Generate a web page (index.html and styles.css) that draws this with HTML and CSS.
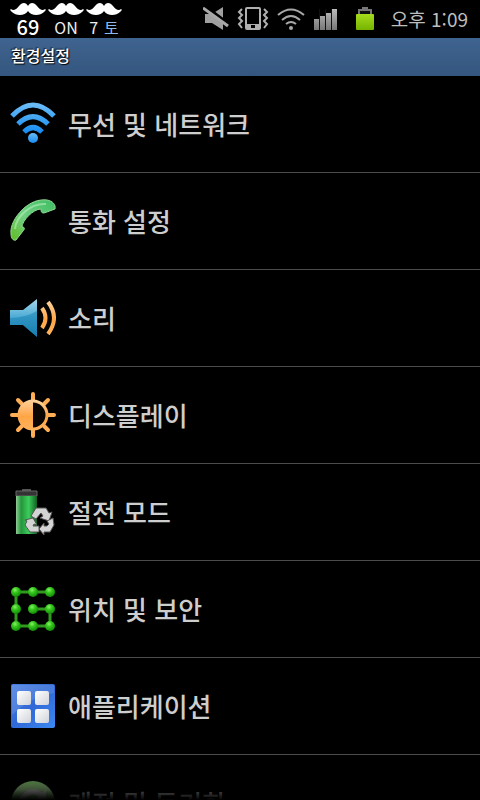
FILE: index.html
```
<!DOCTYPE html>
<html lang="ko">
<head>
<meta charset="utf-8">
<meta name="viewport" content="width=device-width, initial-scale=1">
<title>환경설정</title>
<link rel="stylesheet" href="styles.css">
</head>
<body>
<svg class="defs" aria-hidden="true">
  <defs>
    <linearGradient id="blue" x1="0" y1="0" x2="0" y2="1"><stop offset="0" stop-color="#69baf5"/><stop offset="1" stop-color="#188df0"/></linearGradient>
    <linearGradient id="phone" x1="1" y1="0" x2="0" y2="1"><stop offset="0" stop-color="#3fbd63"/><stop offset=".55" stop-color="#6ed083"/><stop offset="1" stop-color="#62bb24"/></linearGradient>
    <linearGradient id="speaker" x1="0" y1="0" x2="0" y2="1"><stop offset="0" stop-color="#a5d8ec"/><stop offset=".5" stop-color="#48a9d3"/><stop offset="1" stop-color="#167eb0"/></linearGradient>
    <linearGradient id="orange" x1="0" y1="0" x2="0" y2="1"><stop offset="0" stop-color="#ffd09a"/><stop offset=".55" stop-color="#ffa545"/><stop offset="1" stop-color="#ffb25e"/></linearGradient>
    <linearGradient id="cell" x1="0" y1="0" x2="1" y2="0"><stop offset="0" stop-color="#8ecb93"/><stop offset=".25" stop-color="#23963a"/><stop offset=".6" stop-color="#3ccc5c"/><stop offset="1" stop-color="#115f22"/></linearGradient>
    <radialGradient id="dot" cx=".4" cy=".3" r=".7"><stop offset="0" stop-color="#8cf06a"/><stop offset=".4" stop-color="#35c81c"/><stop offset="1" stop-color="#128a08"/></radialGradient>
    <linearGradient id="app" x1="0" y1="0" x2="1" y2="1"><stop offset="0" stop-color="#4a80e2"/><stop offset=".5" stop-color="#3069d6"/><stop offset="1" stop-color="#3d8af4"/></linearGradient>
    <linearGradient id="tile" x1="0" y1="0" x2="1" y2="1"><stop offset="0" stop-color="#fff"/><stop offset="1" stop-color="#cfd3da"/></linearGradient>
    <linearGradient id="lime" x1="0" y1="0" x2="0" y2="1"><stop offset="0" stop-color="#a5dc1c"/><stop offset="1" stop-color="#76b400"/></linearGradient>
    <linearGradient id="sync" x1="0" y1="0" x2="0" y2="1"><stop offset="0" stop-color="#6fae5c"/><stop offset=".2" stop-color="#a4d393"/><stop offset=".6" stop-color="#4b8d38"/></linearGradient>
    <linearGradient id="bars" x1="0" y1="0" x2="0" y2="1"><stop offset="0" stop-color="#bbb"/><stop offset="1" stop-color="#777"/></linearGradient>
    <symbol id="mustache" viewBox="0 0 36 14">
      <path fill="#fff" d="M18 4C16 0 12 0 9 4 6 8 3 9 1 7 0 7 0 9 2 10 6 14 15 14 18 9 21 14 30 14 34 10 36 9 36 7 35 7 33 9 30 8 27 4 24 0 20 0 18 4Z"/>
    </symbol>
  </defs>
</svg>

<header class="status">
  <div class="widgets">
    <div class="widget"><svg class="mustache" aria-hidden="true"><use href="#mustache"/></svg><span class="level">69</span></div>
    <div class="widget"><svg class="mustache" aria-hidden="true"><use href="#mustache"/></svg><span>ON</span></div>
    <div class="widget"><svg class="mustache" aria-hidden="true"><use href="#mustache"/></svg><span class="date"><span>7</span><span class="day">토</span></span></div>
  </div>
  <div class="indicators">
    <svg width="26" height="26" viewBox="0 0 26 26" aria-hidden="true">
      <path fill="#a0a0a0" d="M2 8h7L20 1v23L9 17H2z"/>
      <path stroke="#000" stroke-width="3" d="M2 0l24 18"/>
      <path stroke="#a8a8a8" stroke-width="3" d="M0 2l25 18"/>
    </svg>
    <svg width="32" height="26" viewBox="0 0 32 26" aria-hidden="true" fill="none" stroke="#b0b0b0">
      <rect x="9" y="2" width="14" height="21" rx="1" stroke-width="2"/>
      <path fill="#b0b0b0" stroke="none" d="M9 18h14v5H9z"/><path fill="#000" stroke="none" d="M14 19h4v3h-4z"/>
      <path stroke-width="2" d="M5 3L2 6l3 3-3 3 3 3-3 3 3 4M27 3l3 3-3 3 3 3-3 3 3 3-3 4"/>
    </svg>
    <svg width="28" height="24" viewBox="0 0 28 24" aria-hidden="true" fill="none" stroke="#a8a8a8" stroke-width="2">
      <path d="M1 8Q14-3 27 8M5 13q9-8 18 0M9 17q5-4 10 0"/><circle cx="14" cy="21" r="2" fill="#a8a8a8" stroke="none"/>
    </svg>
    <svg width="26" height="24" viewBox="0 0 26 24" aria-hidden="true" fill="url(#bars)">
      <path d="M1 12h5v11H1zM7 9h5v14H7zM13 6h5v17h-5zM19 2h5v21h-5z"/>
      <path fill="#111" d="M6 2v21h1V2zM12 2v21h1V2zM18 2v21h1V2z"/>
    </svg>
    <svg class="battery" width="20" height="24" viewBox="0 0 20 24" aria-hidden="true">
      <path fill="#777" d="M7 0h6v2h4v6H3V2h4z"/><path fill="#111" d="M5 4h10v3H5z"/><rect x="1" y="7" width="18" height="16" rx="1" fill="url(#lime)"/>
    </svg>
    <time class="clock">오후 1:09</time>
  </div>
</header>

<h1 class="title">환경설정</h1>

<main>
  <ul class="list">
    <li><a class="row" href="#network">
      <svg class="icon" viewBox="0 0 46 46" aria-hidden="true" fill="none" stroke="url(#blue)" stroke-width="5">
        <path d="M2 15Q23-7 44 15M8 23q15-15 30 0M14 31q9-9 18 0"/><circle cx="23" cy="37" r="5" fill="url(#blue)" stroke="none"/>
      </svg><span>무선 및 네트워크</span></a></li>
    <li><a class="row" href="#call">
      <svg class="icon" viewBox="0 0 46 46" aria-hidden="true">
        <path fill="url(#phone)" stroke="#8ed890" d="M6 42C3 43 1 40 1 36 0 28 5 19 12 12 20 4 29 1 37 2 43 3 46 7 45 11L34 15C31 15 31 13 31 11 23 11 12 23 12 29 15 29 15 31 13 33Z"/>
        <path fill="none" stroke="#b8eeb8" stroke-width="2" opacity=".6" d="M5 31C6 19 20 5 36 6"/>
      </svg><span>통화 설정</span></a></li>
    <li><a class="row" href="#sound">
      <svg class="icon" viewBox="0 0 46 46" aria-hidden="true">
        <path fill="url(#speaker)" d="M0 15h13L27 4v38L13 30H0z"/>
        <path fill="#167eb0" opacity=".5" d="M0 23q15 0 27-7v26L13 30H0z"/>
        <path fill="none" stroke="url(#orange)" stroke-width="4" d="M32 13q7 10 0 20M38 7q12 16 0 32"/>
      </svg><span>소리</span></a></li>
    <li><a class="row" href="#display">
      <svg class="icon" viewBox="0 0 46 46" aria-hidden="true">
        <g fill="none" stroke="#ffae55" stroke-width="4" stroke-linecap="round"><path d="M23 2v8M23 36v8M2 23h8M36 23h8M8 8l5 5M33 33l5 5M38 8l-5 5M13 33l-5 5"/></g>
        <circle cx="23" cy="23" r="14" fill="#0b0603" stroke="url(#orange)" stroke-width="3"/>
        <path fill="url(#orange)" d="M23 8a15 15 0 0 0 0 30z"/>
      </svg><span>디스플레이</span></a></li>
    <li><a class="row" href="#power">
      <svg class="icon" viewBox="0 0 46 46" aria-hidden="true">
        <path fill="#555" d="M12 0h9v3h-9z"/><path fill="#333" stroke="#666" d="M6 2h21v5H6z"/>
        <path fill="url(#cell)" d="M6 7h21v38H6z"/>
        <g fill="#d4d4d4" stroke="#555">
          <path d="M21 27l5-8h10l3 5 3-1-3 9-9-3 3-2-2-3-5 6z"/>
          <path d="M37 32l6-3 1 7-4 7h-6v3l-5-6 5-6v3h3l2-2z"/>
          <path d="M29 37v6h-9l-5-7 2-4-2-1 8-2 4 7-3-1-1 2z"/>
        </g>
      </svg><span>절전 모드</span></a></li>
    <li><a class="row" href="#security">
      <svg class="icon" viewBox="0 0 46 46" aria-hidden="true">
        <path fill="none" stroke="#32981f" stroke-width="3" d="M40 6H6v34h34V23H23"/>
        <g fill="url(#dot)"><circle cx="6" cy="6" r="5"/><circle cx="23" cy="6" r="5"/><circle cx="40" cy="6" r="5"/><circle cx="6" cy="23" r="5"/><circle cx="23" cy="23" r="5"/><circle cx="40" cy="23" r="5"/><circle cx="6" cy="40" r="5"/><circle cx="23" cy="40" r="5"/><circle cx="40" cy="40" r="5"/></g>
      </svg><span>위치 및 보안</span></a></li>
    <li><a class="row" href="#apps">
      <svg class="icon" viewBox="0 0 46 46" aria-hidden="true">
        <rect x="1" y="1" width="44" height="44" rx="2" fill="url(#app)"/>
        <path fill="#fff" opacity=".12" d="M2 2h42v8Q20 14 2 32z"/>
        <g fill="url(#tile)"><rect x="7" y="8" width="14" height="14" rx="2"/><rect x="25" y="8" width="14" height="14" rx="2"/><rect x="7" y="26" width="14" height="14" rx="2"/><rect x="25" y="26" width="14" height="14" rx="2"/></g>
      </svg><span>애플리케이션</span></a></li>
    <li><a class="row" href="#sync-accounts">
      <svg class="icon" viewBox="0 0 46 46" aria-hidden="true">
        <circle cx="23" cy="23" r="22" fill="url(#sync)"/>
        <path fill="none" stroke="#d5d5d5" stroke-width="5" d="M11 25a12 12 0 0 1 20-10M35 22a12 12 0 0 1-20 10"/>
        <path fill="#d5d5d5" d="M36 9v11H25zM10 37V26h11z"/>
      </svg><span>계정 및 동기화</span></a></li>
  </ul>
</main>
<div class="fade"></div>
</body>
</html>
```
FILE: styles.css
```
* {
  box-sizing: border-box;
}

body {
  margin: 0;
  height: 100vh;
  overflow: hidden;
  background: #000;
  color: #cecece;
  font-family: "Noto Sans CJK KR", sans-serif;
}

.defs {
  position: absolute;
  width: 0;
  height: 0;
}

.status {
  display: flex;
  justify-content: space-between;
  height: 38px;
  padding: 0 12px 0 10px;
}

.widgets {
  display: flex;
  gap: 2px;
}

.widget {
  display: flex;
  flex-direction: column;
  align-items: center;
  width: 36px;
  padding-top: 2px;
  color: #eee;
  font-size: 16px;
  line-height: 22px;
}

.mustache {
  flex: none;
  width: 36px;
  height: 14px;
}

.level {
  color: #fff;
  font-size: 20px;
  font-weight: 500;
}

.date {
  display: flex;
  gap: 6px;
}

.day {
  color: #8dbbe8;
}

.indicators {
  display: flex;
  align-items: center;
  gap: 8px;
}

.battery {
  margin: 0 8px;
}

.clock {
  color: #bebebe;
  font-size: 19px;
  line-height: 36px;
  white-space: nowrap;
}

.title {
  margin: 0;
  height: 38px;
  padding: 0 11px;
  background: linear-gradient(#3f648f, #34567f);
  color: #fff;
  font-size: 16px;
  font-weight: 500;
  line-height: 34px;
  text-shadow: 1px 1px 1px #000, -1px -1px 1px #12233a;
}

.list {
  margin: 0;
  padding: 0;
  list-style: none;
}

.row {
  display: flex;
  align-items: center;
  gap: 12px;
  height: 97px;
  padding: 0 10px;
  border-bottom: 1px solid #4b4d4b;
  color: inherit;
  font-size: 26px;
  font-weight: 500;
  line-height: 36px;
  text-decoration: none;
}

.icon {
  flex: none;
  width: 46px;
  height: 46px;
}

.fade {
  position: fixed;
  right: 0;
  bottom: 0;
  left: 0;
  height: 28px;
  background: linear-gradient(transparent, #000);
  pointer-events: none;
}
```
